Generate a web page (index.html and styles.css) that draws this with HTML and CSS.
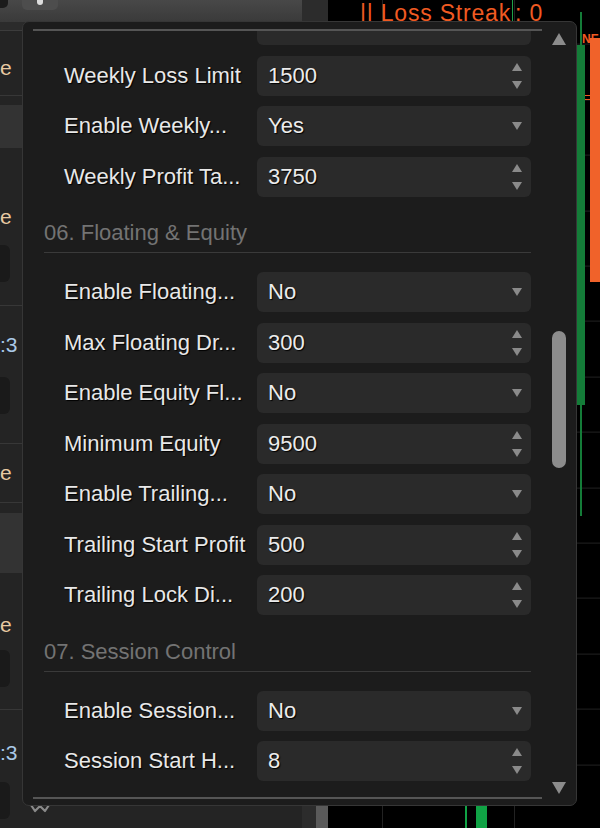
FILE: index.html
```html
<!DOCTYPE html>
<html lang="en">
<head>
  <meta charset="UTF-8">
  <title>Parameters</title>
  <link rel="stylesheet" href="styles.css">
</head>
<body>

  <div class="screen">

    <!-- left panel (mostly covered by the popup) -->
    <aside class="side">
      <div class="side-tools">
        <span class="tool-dark"></span>
        <span class="tool-btn"><i></i></span>
      </div>
      <div class="side-head"></div>

      <div class="side-row row-a">
        <div class="side-name">e</div>
      </div>
      <div class="side-band band-1"></div>
      <div class="side-row row-c">
        <div class="side-name">e</div>
        <div class="side-box"></div>
      </div>
      <div class="side-row row-d">
        <div class="side-ratio">:3</div>
        <div class="side-box"></div>
      </div>
      <div class="side-row row-e">
        <div class="side-name">e</div>
      </div>
      <div class="side-band band-2"></div>
      <div class="side-row row-g">
        <div class="side-name">e</div>
        <div class="side-box"></div>
      </div>
      <div class="side-row row-h">
        <div class="side-ratio">:3</div>
        <div class="side-foot">
          <div class="side-box"></div>
          <svg class="grip" width="20" height="10" viewBox="0 0 20 10">
            <path d="M1 2 L5 8 L10 3 L15 8 L19 2" fill="none" stroke="#8a8a8a" stroke-width="2.2" stroke-linejoin="round"/>
          </svg>
        </div>
      </div>
    </aside>

    <div class="side-scroll"><div class="side-thumb"></div></div>

    <!-- chart -->
    <main class="chart">
      <div class="chart-title">|| Loss Streak<span class="cursor"></span>: 0</div>
      <div class="chart-tag">NE</div>
      <div class="chart-tag tag-t">T</div>
      <div class="level lv-1"></div>
      <div class="level lv-2"></div>
      <div class="wick green" style="left:252px; top:12px; height:504px;"></div>
      <div class="candle green" style="left:249px; top:45px; height:360px; width:8px;"></div>
      <div class="candle orange" style="left:262px; top:38px; height:244px; width:10px;"></div>
      <div class="wick bright" style="left:137px; top:806px; height:22px;"></div>
      <div class="candle bright" style="left:148px; top:806px; height:22px; width:11px;"></div>
    </main>

    <!-- parameters popup -->
    <div class="popup">
      <div class="viewport">
        <div class="list">

          <div class="param">
            <span class="param-name"></span>
            <div class="param-box"></div>
          </div>

          <div class="param">
            <span class="param-name">Weekly Loss Limit</span>
            <div class="param-box">
              <span class="param-value">1500</span>
              <span class="spin"><i class="tri up"></i><i class="tri down"></i></span>
            </div>
          </div>

          <div class="param">
            <span class="param-name">Enable Weekly...</span>
            <div class="param-box">
              <span class="param-value">Yes</span>
              <span class="drop"><i class="tri down"></i></span>
            </div>
          </div>

          <div class="param">
            <span class="param-name">Weekly Profit Ta...</span>
            <div class="param-box">
              <span class="param-value">3750</span>
              <span class="spin"><i class="tri up"></i><i class="tri down"></i></span>
            </div>
          </div>

          <div class="group-title">06. Floating &amp; Equity</div>

          <div class="param">
            <span class="param-name">Enable Floating...</span>
            <div class="param-box">
              <span class="param-value">No</span>
              <span class="drop"><i class="tri down"></i></span>
            </div>
          </div>

          <div class="param">
            <span class="param-name">Max Floating Dr...</span>
            <div class="param-box">
              <span class="param-value">300</span>
              <span class="spin"><i class="tri up"></i><i class="tri down"></i></span>
            </div>
          </div>

          <div class="param">
            <span class="param-name">Enable Equity Fl...</span>
            <div class="param-box">
              <span class="param-value">No</span>
              <span class="drop"><i class="tri down"></i></span>
            </div>
          </div>

          <div class="param">
            <span class="param-name">Minimum Equity</span>
            <div class="param-box">
              <span class="param-value">9500</span>
              <span class="spin"><i class="tri up"></i><i class="tri down"></i></span>
            </div>
          </div>

          <div class="param">
            <span class="param-name">Enable Trailing...</span>
            <div class="param-box">
              <span class="param-value">No</span>
              <span class="drop"><i class="tri down"></i></span>
            </div>
          </div>

          <div class="param">
            <span class="param-name">Trailing Start Profit</span>
            <div class="param-box">
              <span class="param-value">500</span>
              <span class="spin"><i class="tri up"></i><i class="tri down"></i></span>
            </div>
          </div>

          <div class="param">
            <span class="param-name">Trailing Lock Di...</span>
            <div class="param-box">
              <span class="param-value">200</span>
              <span class="spin"><i class="tri up"></i><i class="tri down"></i></span>
            </div>
          </div>

          <div class="group-title">07. Session Control</div>

          <div class="param">
            <span class="param-name">Enable Session...</span>
            <div class="param-box">
              <span class="param-value">No</span>
              <span class="drop"><i class="tri down"></i></span>
            </div>
          </div>

          <div class="param">
            <span class="param-name">Session Start H...</span>
            <div class="param-box">
              <span class="param-value">8</span>
              <span class="spin"><i class="tri up"></i><i class="tri down"></i></span>
            </div>
          </div>

        </div>
      </div>

      <div class="scrollbar">
        <i class="sb-arrow up"></i>
        <div class="sb-track"><div class="sb-thumb"></div></div>
        <i class="sb-arrow down"></i>
      </div>
    </div>

  </div>

</body>
</html>
```

FILE: styles.css
```css
* {
  box-sizing: border-box;
}

body {
  margin: 0;
  width: 600px;
  height: 828px;
  overflow: hidden;
  background: #000;
  font-family: "Liberation Sans", Arial, sans-serif;
}

.screen {
  position: relative;
  display: flex;
  height: 828px;
}

/* left panel */
.side {
  flex: none;
  width: 302px;
  background: #242424;
  overflow: hidden;
}

.side-tools {
  display: flex;
  align-items: flex-start;
  height: 22px;
  background: linear-gradient(#484848, #3a3a3a);
}

.tool-dark {
  width: 8px;
  height: 8px;
  background: #1b1b1b;
  border-radius: 0 0 5px 0;
}

.tool-btn {
  display: flex;
  justify-content: center;
  width: 36px;
  height: 10px;
  margin-left: 14px;
  background: #4d4d4d;
  border-radius: 0 0 5px 5px;
}

.tool-btn i {
  width: 6px;
  height: 5px;
  background: #ddd;
  border-radius: 0 0 3px 3px;
}

.side-head {
  height: 9px;
  background: #2b2b2b;
  border-bottom: 1px solid #3c3c3c;
}

.side-row {
  border-bottom: 1px solid #373737;
}

.side-name,
.side-ratio {
  white-space: nowrap;
  font-size: 21px;
  line-height: 24px;
}

.side-name {
  color: #e8caa2;
}

.side-ratio {
  color: #a9c9e8;
}

.side-box {
  width: 10px;
  height: 37px;
  background: #1a1a1a;
  border-radius: 0 6px 6px 0;
}

.side-band {
  background: #333;
}

.band-1 { margin-top: 9px; height: 43px; }
.band-2 { margin-top: 10px; height: 60px; }

.row-a { padding: 25px 0 15px; }
.row-c { padding: 57px 0 23px; }
.row-c .side-box { margin-top: 16px; }
.row-d { padding: 27px 0 29px; }
.row-d .side-box { margin-top: 20px; }
.row-e { padding: 17px 0 17px; }
.row-g { padding: 40px 0 22px; }
.row-g .side-box { margin-top: 13px; }
.row-h { padding-top: 31px; border-bottom: none; }

.side-foot {
  display: flex;
  align-items: flex-end;
  margin-top: 17px;
}

.grip {
  margin: 0 0 6px 20px;
}

.side-scroll {
  flex: none;
  display: flex;
  flex-direction: column;
  justify-content: flex-end;
  width: 26px;
  background: #2c2c2c;
}

.side-thumb {
  height: 120px;
  margin-left: 14px;
  background: #5a5a5a;
}

/* chart */
.chart {
  position: relative;
  flex: 1;
  overflow: hidden;
  background-color: #000;
  background-image:
    repeating-linear-gradient(to bottom, transparent 0, transparent 54.4px, #202020 54.4px, #202020 55.4px),
    repeating-linear-gradient(to right, transparent 0, transparent 54px, #222 54px, #222 55px, transparent 55px, transparent 132px);
  background-position: 0 -10.4px, 0 0;
}

.chart-title {
  display: flex;
  align-items: flex-start;
  margin-left: 32px;
  color: #f05a22;
  font-size: 23px;
  letter-spacing: 0.8px;
  white-space: pre;
}

.cursor {
  width: 1px;
  height: 22px;
  margin: 0 2px 0 1px;
  background: #1fa34a;
}

.chart-tag {
  position: absolute;
  left: 254px;
  top: 32px;
  color: #f05a22;
  font-size: 12px;
  font-weight: bold;
}

.tag-t {
  left: 262px;
  top: 56px;
  font-size: 18px;
}

.level {
  position: absolute;
  left: 250px;
  width: 22px;
  height: 1px;
  background: #f05a22;
}

.lv-1 { top: 95px; }
.lv-2 { top: 99px; }

.wick,
.candle {
  position: absolute;
}

.wick {
  width: 2px;
}

.green { background: #147c38; }
.orange { background: #f0622a; }
.bright { background: #10a345; }

/* popup */
.popup {
  position: absolute;
  left: 22px;
  top: 21px;
  display: flex;
  width: 555px;
  height: 785px;
  padding: 7px 0 6px 10px;
  background: #1c1c1c;
  border: 1px solid #363636;
  border-radius: 7px;
}

.viewport {
  width: 509px;
  height: 770px;
  overflow: hidden;
  border-top: 2px solid #555;
  border-bottom: 2px solid #555;
}

.list {
  margin-top: -26px;
}

.param {
  display: flex;
  align-items: center;
  height: 40px;
  margin-bottom: 10.5px;
}

.param-name {
  flex: none;
  width: 224px;
  padding-left: 31px;
  overflow: hidden;
  white-space: nowrap;
  color: #e8e8e8;
  font-size: 22px;
  text-shadow: 1px 1px 1px #000;
}

.param-box {
  display: flex;
  align-items: center;
  justify-content: space-between;
  width: 274px;
  height: 40px;
  padding: 0 9px 0 11px;
  background: #2a2a2a;
  border-radius: 6px;
}

.param-value {
  color: #ececec;
  font-size: 22px;
  text-shadow: 1px 1px 1px #000;
}

.spin {
  display: flex;
  flex-direction: column;
  gap: 10px;
}

.drop {
  display: flex;
}

.tri {
  width: 0;
  height: 0;
  border-left: 5px solid transparent;
  border-right: 5px solid transparent;
}

.tri.up {
  border-bottom: 8px solid #8a8a8a;
}

.tri.down {
  border-top: 8px solid #8a8a8a;
}

.group-title {
  margin: 0 11px 19px;
  padding: 14px 0 7px;
  border-bottom: 1px solid #3a3a3a;
  color: #737373;
  font-size: 22px;
  line-height: 24px;
}

.scrollbar {
  display: flex;
  flex-direction: column;
  align-items: center;
  width: 34px;
  height: 770px;
}

.sb-arrow {
  width: 0;
  height: 0;
  border-left: 7.5px solid transparent;
  border-right: 7.5px solid transparent;
}

.sb-arrow.up {
  margin-top: 4px;
  border-bottom: 12px solid #8c8c8c;
}

.sb-arrow.down {
  margin-bottom: 5px;
  border-top: 12px solid #8c8c8c;
}

.sb-track {
  flex: 1;
}

.sb-thumb {
  width: 14px;
  height: 137px;
  margin-top: 286px;
  background: #8c8c8c;
  border-radius: 7px;
}
```
